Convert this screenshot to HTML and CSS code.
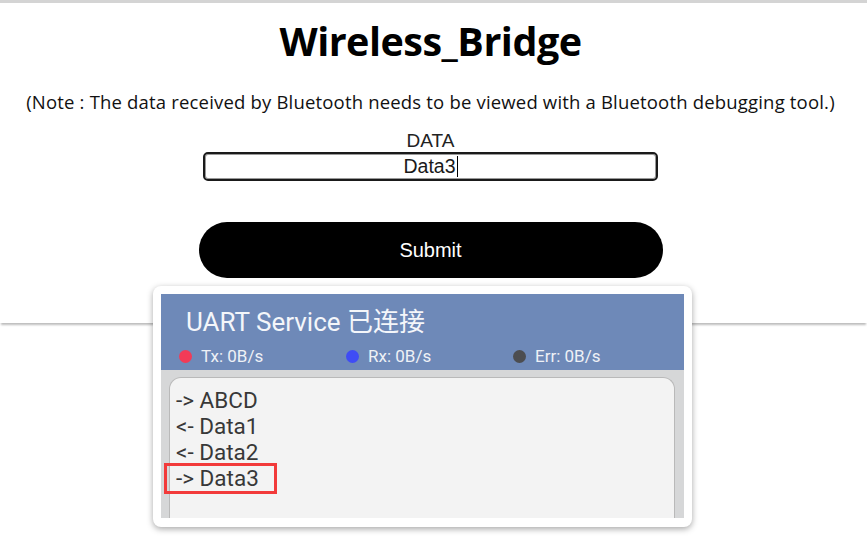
FILE: index.html
```html
<!DOCTYPE html>
<html>
<head>
<meta charset="utf-8">
<link rel="stylesheet" href="styles.css">
</head>
<body>
<div class="page">
  <h1 class="title">Wireless_Bridge</h1>
  <p class="note">(Note : The data received by Bluetooth needs to be viewed with a Bluetooth debugging tool.)</p>
  <div class="form">
    <label class="label">DATA</label>
    <div class="input"><span class="value">Data3</span><span class="caret"></span></div>
    <button class="submit">Submit</button>
  </div>
</div>
<div class="shot">
  <div class="phone">
    <div class="header">
      <div class="htitle">UART Service 已连接</div>
      <div class="stats">
        <div class="stat"><span class="dot red"></span>Tx: 0B/s</div>
        <div class="stat"><span class="dot blue"></span>Rx: 0B/s</div>
        <div class="stat"><span class="dot grey"></span>Err: 0B/s</div>
      </div>
    </div>
    <div class="body">
      <div class="log">
        <div class="line">-&gt; ABCD</div>
        <div class="line">&lt;- Data1</div>
        <div class="line">&lt;- Data2</div>
        <div class="line hl">-&gt; Data3</div>
      </div>
    </div>
  </div>
</div>
</body>
</html>
```
FILE: styles.css
```css
html, body { margin: 0; padding: 0; background: #fff; }
body { width: 867px; height: 540px; overflow: hidden; position: relative; }
.page {
  height: 320px;
  padding-right: 6px;
  border-top: 3px solid #d4d4d4;
  box-shadow: 0 3px 2px -1px #bdbdbd;
  display: flex;
  flex-direction: column;
  align-items: center;
}
.title {
  margin: 16px 0 0;
  font-family: "Open Sans", sans-serif;
  font-weight: 700;
  font-size: 39.5px;
  line-height: 44px;
  letter-spacing: -0.5px;
  color: #000;
}
.note {
  margin: 27px 0 0;
  font-family: "Open Sans", sans-serif;
  font-size: 18.5px;
  line-height: 24px;
  color: #111;
  letter-spacing: 0.18px;
  white-space: nowrap;
}
.form { display: flex; flex-direction: column; align-items: center; }
.label {
  margin-top: 17px;
  font-family: "Liberation Sans", Arial, sans-serif;
  font-size: 19px;
  line-height: 20px;
  color: #222;
}
.input {
  margin-top: 1px;
  width: 451px;
  height: 25px;
  border: 2px solid #1a1a1a;
  border-radius: 5px;
  box-shadow: inset 0 0 0 1px #999;
  display: flex;
  justify-content: center;
  align-items: center;
  font-family: "Liberation Sans", Arial, sans-serif;
  font-size: 19.5px;
  color: #1a1a1a;
}
.caret { width: 1px; height: 21px; background: #000; margin-left: 1px; }
.submit {
  margin-top: 41px;
  width: 464px;
  height: 56px;
  border: 0;
  border-radius: 28px;
  background: #000;
  color: #fff;
  font-family: "Liberation Sans", Arial, sans-serif;
  font-size: 20px;
}
.shot {
  position: absolute;
  left: 153px;
  top: 286px;
  width: 523px;
  height: 225px;
  padding: 8px;
  background: #fff;
  border-radius: 8px;
  box-shadow: 0 2px 6px rgba(0,0,0,0.35);
}
.phone { height: 224px; display: flex; flex-direction: column; overflow: hidden; }
.header {
  background: #6e89b8;
  height: 76px;
  padding: 0 0 0 25px;
  color: #fff;
  font-family: Roboto, "Noto Sans CJK SC", sans-serif;
}
.htitle { font-size: 26px; line-height: 30px; margin-top: 13px; color: #f4f6fa; }
.stats { display: flex; margin-top: 8px; margin-left: -7px; font-size: 17px; line-height: 22px; color: #eef1f6; }
.stat { display: flex; align-items: center; width: 167px; }
.dot { width: 13px; height: 13px; border-radius: 50%; margin-right: 9px; }
.red { background: #f23b57; }
.blue { background: #3f4cf5; }
.grey { background: #4c4d50; }
.body { flex: 1; background: #d6d7d8; padding: 7px 9px 0 8px; }
.log {
  height: 100%;
  background: #f3f3f3;
  border: 1px solid #b9b9b9;
  border-bottom: 0;
  border-radius: 12px 12px 0 0;
  padding: 9px 0 0 6px;
  font-family: Roboto, sans-serif;
  font-size: 22.5px;
  line-height: 26px;
  color: #383838;
}
.line { position: relative; }
.hl::after {
  content: "";
  position: absolute;
  left: -12px;
  top: -2px;
  width: 107px;
  height: 25px;
  border: 3px solid #f23a3a;
}
```
